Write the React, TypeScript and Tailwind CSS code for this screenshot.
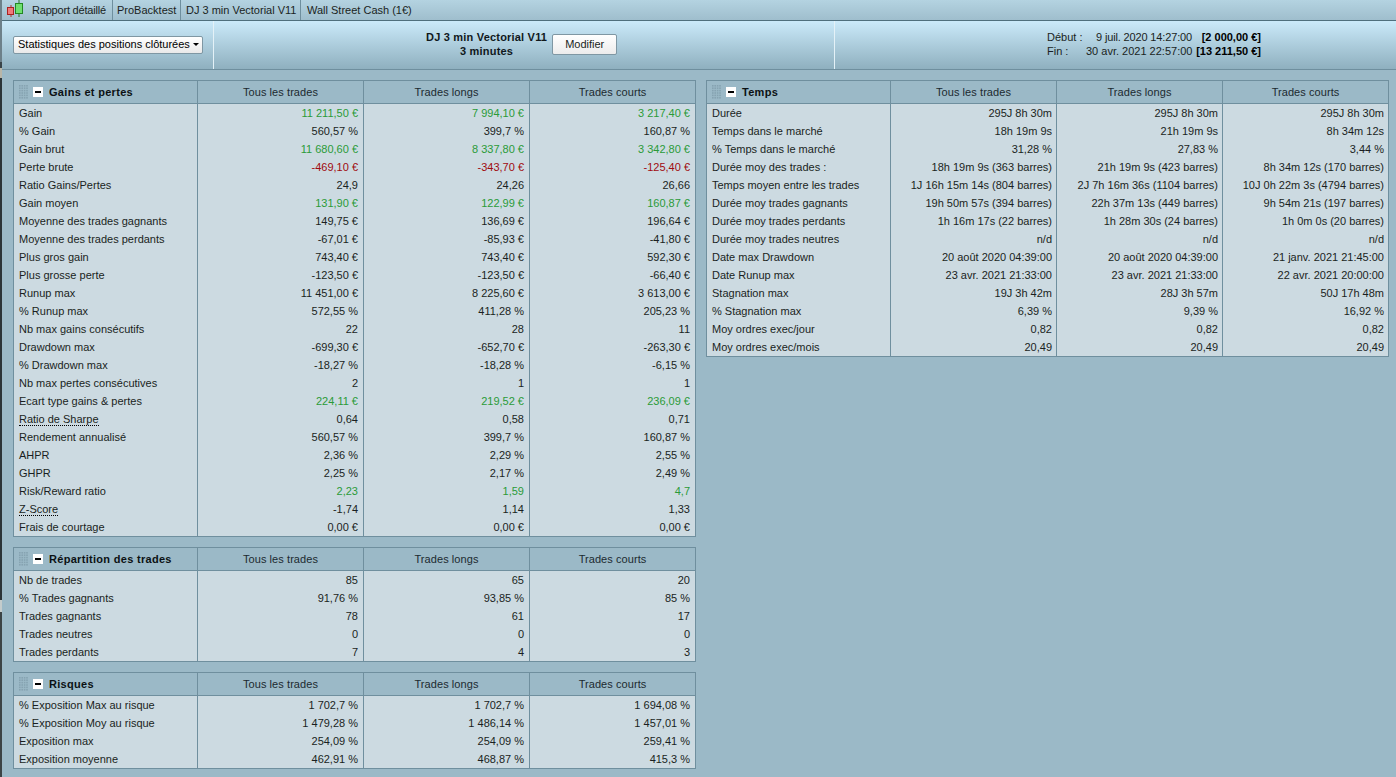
const font = "font-['Liberation_Sans',Arial,sans-serif]";

type Row = { label: string; values: string[]; color?: 'green' | 'red'; dotted?: boolean };

const gains: Row[] = [
  { label: 'Gain', values: ['11 211,50 €', '7 994,10 €', '3 217,40 €'], color: 'green' },
  { label: '% Gain', values: ['560,57 %', '399,7 %', '160,87 %'] },
  { label: 'Gain brut', values: ['11 680,60 €', '8 337,80 €', '3 342,80 €'], color: 'green' },
  { label: 'Perte brute', values: ['-469,10 €', '-343,70 €', '-125,40 €'], color: 'red' },
  { label: 'Ratio Gains/Pertes', values: ['24,9', '24,26', '26,66'] },
  { label: 'Gain moyen', values: ['131,90 €', '122,99 €', '160,87 €'], color: 'green' },
  { label: 'Moyenne des trades gagnants', values: ['149,75 €', '136,69 €', '196,64 €'] },
  { label: 'Moyenne des trades perdants', values: ['-67,01 €', '-85,93 €', '-41,80 €'] },
  { label: 'Plus gros gain', values: ['743,40 €', '743,40 €', '592,30 €'] },
  { label: 'Plus grosse perte', values: ['-123,50 €', '-123,50 €', '-66,40 €'] },
  { label: 'Runup max', values: ['11 451,00 €', '8 225,60 €', '3 613,00 €'] },
  { label: '% Runup max', values: ['572,55 %', '411,28 %', '205,23 %'] },
  { label: 'Nb max gains consécutifs', values: ['22', '28', '11'] },
  { label: 'Drawdown max', values: ['-699,30 €', '-652,70 €', '-263,30 €'] },
  { label: '% Drawdown max', values: ['-18,27 %', '-18,28 %', '-6,15 %'] },
  { label: 'Nb max pertes consécutives', values: ['2', '1', '1'] },
  { label: 'Ecart type gains & pertes', values: ['224,11 €', '219,52 €', '236,09 €'], color: 'green' },
  { label: 'Ratio de Sharpe', values: ['0,64', '0,58', '0,71'], dotted: true },
  { label: 'Rendement annualisé', values: ['560,57 %', '399,7 %', '160,87 %'] },
  { label: 'AHPR', values: ['2,36 %', '2,29 %', '2,55 %'] },
  { label: 'GHPR', values: ['2,25 %', '2,17 %', '2,49 %'] },
  { label: 'Risk/Reward ratio', values: ['2,23', '1,59', '4,7'], color: 'green' },
  { label: 'Z-Score', values: ['-1,74', '1,14', '1,33'], dotted: true },
  { label: 'Frais de courtage', values: ['0,00 €', '0,00 €', '0,00 €'] },
];

const repartition: Row[] = [
  { label: 'Nb de trades', values: ['85', '65', '20'] },
  { label: '% Trades gagnants', values: ['91,76 %', '93,85 %', '85 %'] },
  { label: 'Trades gagnants', values: ['78', '61', '17'] },
  { label: 'Trades neutres', values: ['0', '0', '0'] },
  { label: 'Trades perdants', values: ['7', '4', '3'] },
];

const risques: Row[] = [
  { label: '% Exposition Max au risque', values: ['1 702,7 %', '1 702,7 %', '1 694,08 %'] },
  { label: '% Exposition Moy au risque', values: ['1 479,28 %', '1 486,14 %', '1 457,01 %'] },
  { label: 'Exposition max', values: ['254,09 %', '254,09 %', '259,41 %'] },
  { label: 'Exposition moyenne', values: ['462,91 %', '468,87 %', '415,3 %'] },
];

const temps: Row[] = [
  { label: 'Durée', values: ['295J 8h 30m', '295J 8h 30m', '295J 8h 30m'] },
  { label: 'Temps dans le marché', values: ['18h 19m 9s', '21h 19m 9s', '8h 34m 12s'] },
  { label: '% Temps dans le marché', values: ['31,28 %', '27,83 %', '3,44 %'] },
  { label: 'Durée moy des trades :', values: ['18h 19m 9s (363 barres)', '21h 19m 9s (423 barres)', '8h 34m 12s (170 barres)'] },
  { label: 'Temps moyen entre les trades', values: ['1J 16h 15m 14s (804 barres)', '2J 7h 16m 36s (1104 barres)', '10J 0h 22m 3s (4794 barres)'] },
  { label: 'Durée moy trades gagnants', values: ['19h 50m 57s (394 barres)', '22h 37m 13s (449 barres)', '9h 54m 21s (197 barres)'] },
  { label: 'Durée moy trades perdants', values: ['1h 16m 17s (22 barres)', '1h 28m 30s (24 barres)', '1h 0m 0s (20 barres)'] },
  { label: 'Durée moy trades neutres', values: ['n/d', 'n/d', 'n/d'] },
  { label: 'Date max Drawdown', values: ['20 août 2020 04:39:00', '20 août 2020 04:39:00', '21 janv. 2021 21:45:00'] },
  { label: 'Date Runup max', values: ['23 avr. 2021 21:33:00', '23 avr. 2021 21:33:00', '22 avr. 2021 20:00:00'] },
  { label: 'Stagnation max', values: ['19J 3h 42m', '28J 3h 57m', '50J 17h 48m'] },
  { label: '% Stagnation max', values: ['6,39 %', '9,39 %', '16,92 %'] },
  { label: 'Moy ordres exec/jour', values: ['0,82', '0,82', '0,82'] },
  { label: 'Moy ordres exec/mois', values: ['20,49', '20,49', '20,49'] },
];

function Grip() {
  const dots = [];
  for (let y = 0; y < 6; y++) {
    for (let x = 0; x < 4; x++) {
      dots.push(<rect key={`${x}-${y}`} x={x * 2.4} y={y * 2.4} width="1.6" height="1.6" fill="#86a3b1" />);
    }
  }
  return (
    <svg width="9" height="14" viewBox="0 0 9 14" className="shrink-0">
      {dots}
    </svg>
  );
}

function Panel({ title, rows, right }: { title: string; rows: Row[]; right?: boolean }) {
  return (
    <div className="w-[683px] border border-[#6f8f9e] bg-[#ccdae1]">
      <div className="grid h-[23px] grid-cols-[183px_166px_166px_166px] border-b border-[#6f8f9e] bg-[#9bb9c7] text-[#1c2a30]">
        <div className="flex items-center pl-[5px]">
          <Grip />
          <span className="ml-[5px] flex h-[10px] w-[10px] items-center justify-center bg-white">
            <span className="h-[2px] w-[6px] bg-black" />
          </span>
          <span className="ml-[6px] whitespace-nowrap text-[11px] font-bold tracking-[0.3px] text-[#0b1114]">{title}</span>
        </div>
        {['Tous les trades', 'Trades longs', 'Trades courts'].map((h) => (
          <div key={h} className="flex items-center justify-center border-l border-[#6f8f9e] tracking-[0.07px]">
            {h}
          </div>
        ))}
      </div>
      {rows.map((r) => (
        <div key={r.label} className="grid h-[18px] grid-cols-[183px_166px_166px_166px] leading-[18px]">
          <div className="whitespace-nowrap pl-[5px] text-[#1a1f22]">
            <span className={r.dotted ? 'inline-block border-b border-dotted border-black leading-[12px]' : ''}>{r.label}</span>
          </div>
          {r.values.map((v, i) => (
            <div
              key={i}
              className={`whitespace-nowrap border-l border-[#6f8f9e] text-right ${right ? 'pr-[4px]' : 'pr-[5px]'} ${
                r.color === 'green' ? 'text-[#2a9a38]' : r.color === 'red' ? 'text-[#a00a10]' : 'text-[#1a1f22]'
              }`}
            >
              {v}
            </div>
          ))}
        </div>
      ))}
    </div>
  );
}

function Tab({ label, width, last, tight }: { label: string; width: string; last?: boolean; tight?: boolean }) {
  return (
    <div
      className={`flex h-full items-center whitespace-nowrap ${width} ${last ? '' : 'border-r border-[#6f8f9e]'} ${
        tight ? 'tracking-[-0.2px]' : ''
      }`}
    >
      {label}
    </div>
  );
}

export default function App() {
  return (
    <div className={`${font} flex h-[777px] w-[1396px] overflow-hidden bg-[#9bb9c7] text-[11px] text-[#1a1f22]`}>
      {/* bit of the window behind, on the left edge */}
      <div className="flex w-[2px] shrink-0 flex-col">
        <div className="h-[62px] bg-[#6d8089]" />
        <div className="h-[6px] bg-[#3a4448]" />
        <div className="h-[10px] bg-[#b9b6a8]" />
        <div className="h-[522px] bg-[#2b3438]" />
        <div className="h-[12px] bg-[#c4cccc]" />
        <div className="flex-1 bg-[#3c4446]" />
      </div>

      <div className="flex min-w-0 flex-1 flex-col">
        {/* tabs */}
        <div className="flex h-[21px] items-center border-b border-[#4f6f7d] bg-gradient-to-b from-[#b4d3e1] to-[#9fbecd] pl-[4px]">
          <svg width="20" height="20" viewBox="0 0 20 20" className="mr-[6px] shrink-0">
            <line x1="5" y1="5" x2="5" y2="17" stroke="#a33" />
            <rect x="1.5" y="7.5" width="6" height="7" fill="#ef7a7a" stroke="#a22" />
            <line x1="13" y1="0" x2="13" y2="17" stroke="#272" />
            <rect x="9.5" y="3.5" width="7" height="10" fill="#6fe06f" stroke="#282" />
          </svg>
          <Tab label="Rapport détaillé" width="w-[81px]" tight />
          <div className="w-[4px]" />
          <Tab label="ProBacktest" width="w-[64px]" />
          <div className="w-[5px]" />
          <Tab label="DJ 3 min Vectorial V11" width="w-[115px]" />
          <div className="w-[6px]" />
          <Tab label="Wall Street Cash (1€)" width="w-[110px]" last />
        </div>

        {/* toolbar */}
        <div className="flex h-[49px] border-b border-[#6f8f9e] bg-gradient-to-b from-[#cbeafa] to-[#8fb0bf]">
          <div className="flex w-[212px] items-center border-r border-[#e4f1f7] pl-[11px] pb-[1px]">
            <div className="flex h-[18px] w-[190px] items-center whitespace-nowrap rounded-[2px] border border-[#7f97a3] bg-gradient-to-b from-white to-[#e9e9e9] pl-[4px] text-black">
              Statistiques des positions clôturées
              <span className="ml-[3px] h-0 w-0 border-x-[3px] border-t-[3px] border-x-transparent border-t-black" />
            </div>
          </div>
          <div className="flex w-[621px] items-center border-r border-[#e4f1f7] pl-[212px] pb-[2px]">
            <div className="whitespace-nowrap text-center font-bold leading-[14px] tracking-[0.2px] text-[#10181c]">
              <div>DJ 3 min Vectorial V11</div>
              <div>3 minutes</div>
            </div>
            <button className="ml-[5px] h-[21px] w-[65px] rounded-[2px] border border-[#7f97a3] bg-gradient-to-b from-white to-[#ececec]">
              Modifier
            </button>
          </div>
          <div className="flex flex-1 flex-col justify-center whitespace-nowrap pb-[2px] pl-[212px] leading-[14px]">
            <div className="flex">
              <span className="w-[39px]">Début :</span>
              <span className="w-[106px] text-right tracking-[-0.15px]">9 juil. 2020 14:27:00</span>
              <span className="w-[69px] text-right font-bold text-black">[2 000,00 €]</span>
            </div>
            <div className="flex">
              <span className="w-[39px]">Fin :</span>
              <span className="w-[106px] text-right">30 avr. 2021 22:57:00</span>
              <span className="w-[69px] text-right font-bold text-black">[13 211,50 €]</span>
            </div>
          </div>
        </div>

        {/* content */}
        <div className="flex gap-[10px] pl-[11px] pt-[10px]">
          <div className="flex flex-col gap-[10px]">
            <Panel title="Gains et pertes" rows={gains} />
            <Panel title="Répartition des trades" rows={repartition} />
            <Panel title="Risques" rows={risques} />
          </div>
          <div>
            <Panel title="Temps" rows={temps} right />
          </div>
        </div>
      </div>
    </div>
  );
}
